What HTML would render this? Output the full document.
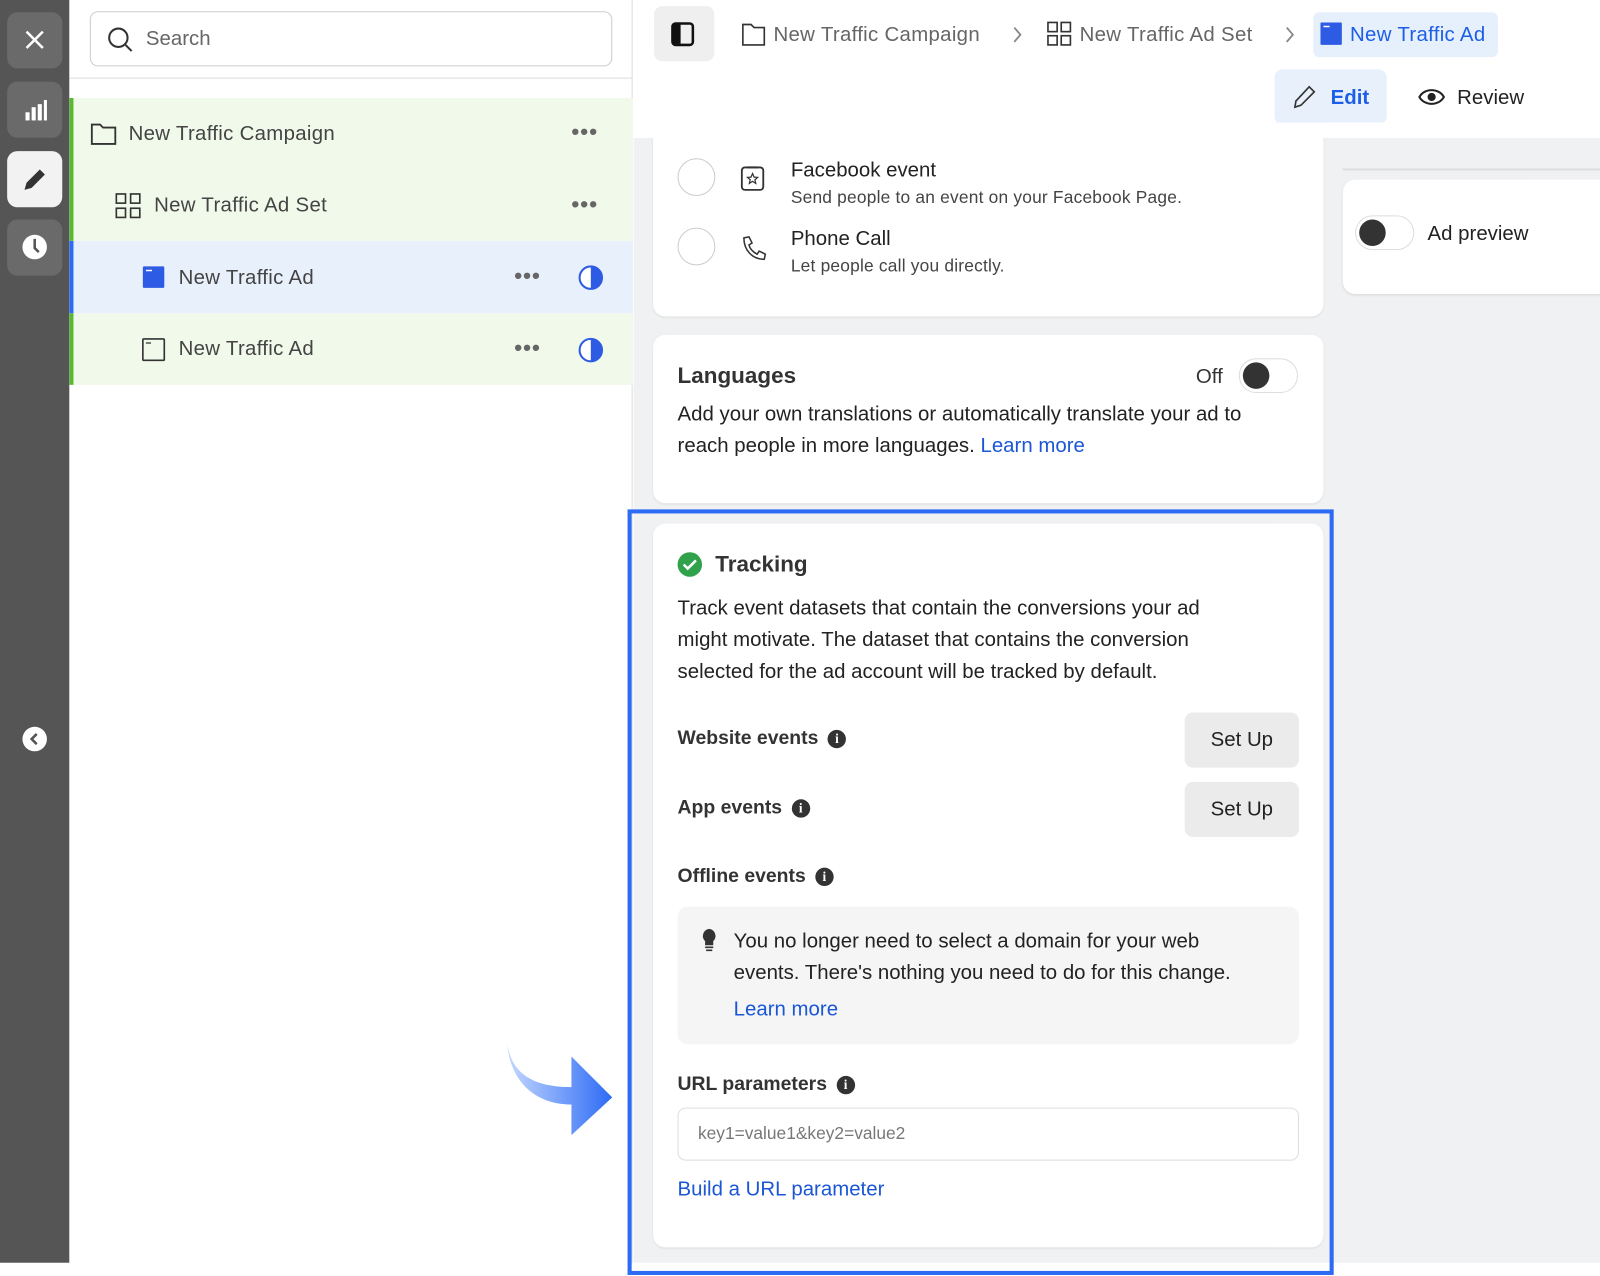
<!DOCTYPE html>
<html><head><meta charset="utf-8"><style>
*{box-sizing:border-box;margin:0;padding:0}
html,body{width:1600px;height:1276px;overflow:hidden;background:#fff}
#w{position:absolute;left:0;top:0;width:1568px;height:1250px;transform:scale(1.02041,1.0208);transform-origin:0 0;font-family:"Liberation Sans",sans-serif;color:#1c1e21}
.a{position:absolute}
.sb{left:0;top:0;width:68px;height:1237px;background:#555}
.btn{left:7px;width:54px;height:55px;border-radius:10px;background:#6a6a6a}
.t{font-size:20px;color:#444;white-space:nowrap}
.dots{font-size:22px;color:#666;letter-spacing:1px;font-weight:bold}
.card{background:#fff;border-radius:12px;box-shadow:0 1px 2px rgba(0,0,0,.08)}
.lnk{color:#1a56d6}
.b{font-weight:bold}
.info{display:inline-block;width:18px;height:18px;border-radius:50%;background:#333;color:#fff;font-size:13px;text-align:center;line-height:18px;font-weight:bold;font-family:"Liberation Serif",serif;vertical-align:1px;margin-left:4px}
.setup{background:#ebebeb;border-radius:8px;width:112px;height:54px;font-size:20px;text-align:center;line-height:54px;color:#222}
</style></head><body><div id="w">
<div class="a sb"></div>
<div class="a btn" style="top:12px"><svg width="54" height="55"><path d="M19 19L35 35M35 19L19 35" stroke="#fff" stroke-width="2.5"/></svg></div>
<div class="a btn" style="top:80px"><svg width="54" height="55"><rect x="18" y="30" width="4" height="8" fill="#fff"/><rect x="24" y="25" width="4" height="13" fill="#fff"/><rect x="30" y="22" width="4" height="16" fill="#fff"/><rect x="36" y="18" width="3" height="20" fill="#fff"/></svg></div>
<div class="a btn" style="top:148px;background:#f2f2f2"><svg width="54" height="55"><path d="M17 38l2-7 13-13 5 5-13 13z" fill="#333"/></svg></div>
<div class="a btn" style="top:215px"><svg width="54" height="55"><circle cx="27" cy="27" r="12" fill="#fff"/><path d="M27 19v9l4 4" stroke="#555" stroke-width="2.5" fill="none"/></svg></div>
<svg class="a" style="left:21px;top:711px" width="26" height="26"><circle cx="13" cy="13" r="12" fill="#fff"/><path d="M15 8l-5 5 5 5" stroke="#555" stroke-width="2.5" fill="none"/></svg>

<div class="a" style="left:68px;top:0;width:552px;height:1237px;background:#fff;border-right:1px solid #ddd"></div>
<div class="a" style="left:88px;top:11px;width:512px;height:54px;border:1px solid #ccc;border-radius:8px"></div>
<svg class="a" style="left:104px;top:25px" width="28" height="28"><circle cx="12" cy="12" r="9" stroke="#333" stroke-width="2" fill="none"/><path d="M19 19l6 6" stroke="#333" stroke-width="2"/></svg>
<div class="a t" style="left:143px;top:27px;color:#666">Search</div>
<div class="a" style="left:68px;top:76px;width:552px;height:1px;background:#ddd"></div>

<div class="a" style="left:68px;top:96px;width:552px;height:140px;background:#f1f9ea;border-left:4px solid #5cb833"></div>
<div class="a" style="left:68px;top:236px;width:552px;height:71px;background:#e8f0fc;border-left:4px solid #2d6bf5"></div>
<div class="a" style="left:68px;top:307px;width:552px;height:70px;background:#f1f9ea;border-left:4px solid #5cb833"></div>
<svg class="a" style="left:88px;top:118px" width="28" height="26"><path d="M2 4h8l3 3h12v16H2z" stroke="#333" stroke-width="1.8" fill="none"/></svg>
<div class="a t" style="left:126px;top:120px;letter-spacing:.3px">New Traffic Campaign</div><div class="a dots" style="left:560px;top:116px">•••</div>
<svg class="a" style="left:113px;top:189px" width="26" height="26"><g stroke="#333" stroke-width="1.6" fill="none"><rect x="1" y="1" width="9" height="9"/><rect x="15" y="1" width="9" height="9"/><rect x="1" y="15" width="9" height="9"/><rect x="15" y="15" width="9" height="9"/></g></svg>
<div class="a t" style="left:151px;top:190px;letter-spacing:.3px">New Traffic Ad Set</div><div class="a dots" style="left:560px;top:187px">•••</div>
<svg class="a" style="left:139px;top:260px" width="24" height="24"><rect x="1" y="1" width="21" height="21" rx="1" fill="#2d5be3"/><path d="M4 5h6" stroke="#fff" stroke-width="1.5"/></svg>
<div class="a t" style="left:175px;top:261px;letter-spacing:.3px">New Traffic Ad</div><div class="a dots" style="left:504px;top:257px">•••</div>
<svg class="a" style="left:566px;top:258px" width="28" height="28"><circle cx="13" cy="14" r="11" stroke="#2d5be3" stroke-width="2" fill="#fff"/><path d="M13 3a11 11 0 0 1 0 22z" fill="#2d5be3"/></svg>
<svg class="a" style="left:139px;top:331px" width="24" height="24"><rect x="1" y="1" width="21" height="21" rx="1" stroke="#333" stroke-width="1.6" fill="none"/><path d="M4 5h5" stroke="#333" stroke-width="1.3"/></svg>
<div class="a t" style="left:175px;top:331px;letter-spacing:.3px">New Traffic Ad</div><div class="a dots" style="left:504px;top:328px">•••</div>
<svg class="a" style="left:566px;top:329px" width="28" height="28"><circle cx="13" cy="14" r="11" stroke="#2d5be3" stroke-width="2" fill="#fff"/><path d="M13 3a11 11 0 0 1 0 22z" fill="#2d5be3"/></svg>

<div class="a" style="left:621px;top:135px;width:947px;height:1102px;background:#f0f1f2"></div>
<div class="a" style="left:641px;top:6px;width:59px;height:54px;background:#efefef;border-radius:8px"></div>
<svg class="a" style="left:657px;top:21px" width="26" height="26"><rect x="2" y="2" width="20" height="21" rx="3" stroke="#111" stroke-width="2.5" fill="none"/><rect x="3" y="3" width="7" height="19" fill="#111"/></svg>
<svg class="a" style="left:726px;top:22px" width="26" height="24"><path d="M2 2h8l3 3h10v17H2z" stroke="#333" stroke-width="1.6" fill="none"/></svg>
<div class="a t" style="left:758px;top:23px;color:#666;letter-spacing:.3px">New Traffic Campaign</div>
<svg class="a" style="left:990px;top:24px" width="14" height="20"><path d="M4 3l6 7-6 7" stroke="#888" stroke-width="1.8" fill="none"/></svg>
<svg class="a" style="left:1026px;top:21px" width="26" height="26"><g stroke="#333" stroke-width="1.6" fill="none"><rect x="1" y="1" width="9" height="9"/><rect x="14" y="1" width="9" height="9"/><rect x="1" y="14" width="9" height="9"/><rect x="14" y="14" width="9" height="9"/></g></svg>
<div class="a t" style="left:1058px;top:23px;color:#666;letter-spacing:.3px">New Traffic Ad Set</div>
<svg class="a" style="left:1257px;top:24px" width="14" height="20"><path d="M4 3l6 7-6 7" stroke="#888" stroke-width="1.8" fill="none"/></svg>
<div class="a" style="left:1287px;top:12px;width:181px;height:44px;background:#e6effc;border-radius:6px"></div>
<svg class="a" style="left:1294px;top:22px" width="24" height="24"><rect x="0" y="0" width="21" height="22" rx="1" fill="#2d5be3"/><path d="M3 4h6" stroke="#fff" stroke-width="1.5"/></svg>
<div class="a t" style="left:1323px;top:23px;color:#1d5ee8;letter-spacing:.3px">New Traffic Ad</div>
<div class="a" style="left:1249px;top:68px;width:110px;height:54px;background:#e8f0fc;border-radius:8px"></div>
<svg class="a" style="left:1266px;top:82px" width="26" height="26"><path d="M3 23l1-6L17 3l5 5L9 21z" stroke="#333" stroke-width="1.6" fill="none"/></svg>
<div class="a t b" style="left:1304px;top:85px;color:#1d5ee8">Edit</div>
<svg class="a" style="left:1389px;top:84px" width="28" height="22"><path d="M2 11C7 2 21 2 26 11C21 20 7 20 2 11z" stroke="#222" stroke-width="2" fill="none"/><circle cx="14" cy="11" r="4" fill="#222"/></svg>
<div class="a t" style="left:1428px;top:85px;color:#222">Review</div>

<div class="a card" style="left:640px;top:120px;width:657px;height:190px;border-radius:0 0 12px 12px"></div>
<div class="a" style="left:621px;top:120px;width:947px;height:15px;background:#fff"></div>
<div class="a" style="left:664px;top:155px;width:37px;height:37px;border-radius:50%;border:1.5px solid #ccc"></div>
<svg class="a" style="left:724px;top:161px" width="28" height="28"><rect x="3" y="3" width="21" height="22" rx="3" stroke="#333" stroke-width="1.8" fill="none"/><path d="M8 3h11" stroke="#333" stroke-width="2"/><path d="M13.5 9l1.5 3.5 3.5.3-2.7 2.3.9 3.6-3.2-2-3.2 2 .9-3.6-2.7-2.3 3.5-.3z" stroke="#333" stroke-width="1.2" fill="none"/></svg>
<div class="a t" style="left:775px;top:156px;color:#222">Facebook event</div>
<div class="a" style="left:775px;top:184px;font-size:17px;color:#444;letter-spacing:.2px">Send people to an event on your Facebook Page.</div>
<div class="a" style="left:664px;top:223px;width:37px;height:37px;border-radius:50%;border:1.5px solid #ccc"></div>
<svg class="a" style="left:724px;top:229px" width="28" height="28"><path d="M5 4l5-1 3 6-3 2c1 4 4 7 8 9l2-3 6 3-1 5c-12 0-20-9-20-21z" stroke="#333" stroke-width="1.5" fill="none"/></svg>
<div class="a t" style="left:775px;top:223px;color:#222">Phone Call</div>
<div class="a" style="left:775px;top:251px;font-size:17px;color:#444;letter-spacing:.2px">Let people call you directly.</div>

<div class="a card" style="left:640px;top:328px;width:657px;height:165px"></div>
<div class="a b" style="left:664px;top:355px;font-size:22px;color:#333">Languages</div>
<div class="a t" style="left:1172px;top:358px;color:#333">Off</div>
<div class="a" style="left:1214px;top:351px;width:58px;height:34px;border-radius:17px;background:#fff;border:1.5px solid #ddd"></div>
<div class="a" style="left:1218px;top:355px;width:26px;height:26px;border-radius:50%;background:#333"></div>
<div class="a" style="left:664px;top:391px;width:600px;font-size:20px;line-height:31px;color:#222">Add your own translations or automatically translate your ad to reach people in more languages. <span class="lnk">Learn more</span></div>

<div class="a" style="left:1316px;top:165px;width:252px;height:2px;background:#ddd"></div>
<div class="a card" style="left:1316px;top:176px;width:270px;height:112px"></div>
<div class="a" style="left:1328px;top:211px;width:58px;height:34px;border-radius:17px;background:#fff;border:1.5px solid #ddd"></div>
<div class="a" style="left:1332px;top:215px;width:26px;height:26px;border-radius:50%;background:#333"></div>
<div class="a t" style="left:1399px;top:218px;color:#222">Ad preview</div>

<div class="a card" style="left:640px;top:513px;width:657px;height:709px"></div>
<svg class="a" style="left:663px;top:540px" width="26" height="26"><circle cx="13" cy="13" r="12" fill="#31a24c"/><path d="M7 13l4 4 8-8" stroke="#fff" stroke-width="2.5" fill="none"/></svg>
<div class="a b" style="left:701px;top:540px;font-size:22px;color:#333">Tracking</div>
<div class="a" style="left:664px;top:581px;width:560px;font-size:20px;line-height:31px;color:#222">Track event datasets that contain the conversions your ad might motivate. The dataset that contains the conversion selected for the ad account will be tracked by default.</div>
<div class="a b" style="left:664px;top:713px;font-size:19px;color:#333">Website events <span class="info">i</span></div>
<div class="a setup" style="left:1161px;top:698px">Set Up</div>
<div class="a b" style="left:664px;top:781px;font-size:19px;color:#333">App events <span class="info">i</span></div>
<div class="a setup" style="left:1161px;top:766px">Set Up</div>
<div class="a b" style="left:664px;top:848px;font-size:19px;color:#333">Offline events <span class="info">i</span></div>
<div class="a" style="left:664px;top:888px;width:609px;height:135px;background:#f5f5f5;border-radius:10px"></div>
<svg class="a" style="left:684px;top:908px" width="22" height="28"><path d="M11 2a7 7 0 0 0-4 12v4h8v-4a7 7 0 0 0-4-12z" fill="#333"/><path d="M7 20h8M8 23h6" stroke="#333" stroke-width="1.6"/></svg>
<div class="a" style="left:719px;top:907px;width:505px;font-size:20px;line-height:31px;color:#222">You no longer need to select a domain for your web events. There's nothing you need to do for this change.</div>
<div class="a lnk" style="left:719px;top:978px;font-size:20px">Learn more</div>
<div class="a b" style="left:664px;top:1052px;font-size:19px;color:#333">URL parameters <span class="info">i</span></div>
<div class="a" style="left:664px;top:1085px;width:609px;height:52px;border:1px solid #ddd;border-radius:8px;background:#fff"></div>
<div class="a" style="left:684px;top:1101px;font-size:17px;color:#777">key1=value1&amp;key2=value2</div>
<div class="a lnk" style="left:664px;top:1154px;font-size:20px">Build a URL parameter</div>

<div class="a" style="left:615px;top:499px;width:692px;height:750px;border:4px solid #2d6bf5"></div>
<svg class="a" style="left:495px;top:1020px" width="110" height="95"><defs><linearGradient id="g" x1="0" x2="1"><stop offset="0" stop-color="#c4d7ff"/><stop offset="1" stop-color="#2d6bf5"/></linearGradient></defs><path d="M2 2C6 30 25 45 65 45V15L105 55 65 92V62C30 62 5 40 2 2z" fill="url(#g)"/></svg>
</div></body></html>
